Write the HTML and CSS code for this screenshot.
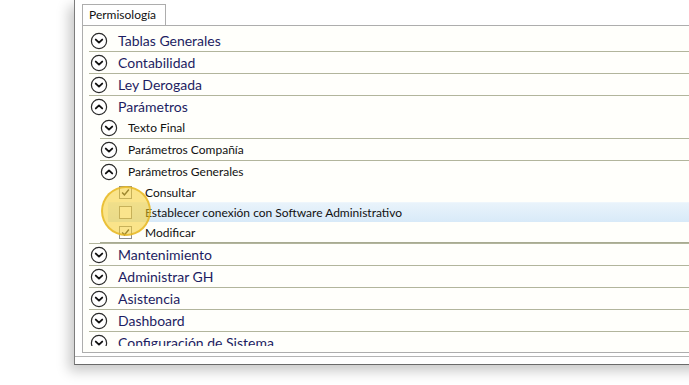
FILE: index.html
```
<!DOCTYPE html>
<html lang="es">
<head>
	<meta charset="UTF-8">
	<title>Permisología</title>
	<link rel="stylesheet" href="styles.css">
</head>
<body>

<div class="window">
	<div class="frame">
		<div class="tabs">
			<div class="tab">Permisología</div>
		</div>
		<div class="panel">
			<div class="tree">

				<div class="node">
					<div class="row top">
						<svg class="ico" viewBox="0 0 18 18"><circle cx="9" cy="9" r="7.6"/><path d="M5.8 7.6 L9 10.6 L12.2 7.6"/></svg>
						<span>Tablas Generales</span>
					</div>
				</div>
				<div class="node">
					<div class="row top">
						<svg class="ico" viewBox="0 0 18 18"><circle cx="9" cy="9" r="7.6"/><path d="M5.8 7.6 L9 10.6 L12.2 7.6"/></svg>
						<span>Contabilidad</span>
					</div>
				</div>
				<div class="node">
					<div class="row top">
						<svg class="ico" viewBox="0 0 18 18"><circle cx="9" cy="9" r="7.6"/><path d="M5.8 7.6 L9 10.6 L12.2 7.6"/></svg>
						<span>Ley Derogada</span>
					</div>
				</div>

				<div class="node open">
					<div class="row top">
						<svg class="ico" viewBox="0 0 18 18"><circle cx="9" cy="9" r="7.6"/><path d="M5.8 10.4 L9 7.4 L12.2 10.4"/></svg>
						<span>Parámetros</span>
					</div>
					<div class="children">
						<div class="sub">
							<div class="row">
								<svg class="ico" viewBox="0 0 18 18"><circle cx="9" cy="9" r="7.6"/><path d="M5.8 7.6 L9 10.6 L12.2 7.6"/></svg>
								<span>Texto Final</span>
							</div>
						</div>
						<div class="sub">
							<div class="row">
								<svg class="ico" viewBox="0 0 18 18"><circle cx="9" cy="9" r="7.6"/><path d="M5.8 7.6 L9 10.6 L12.2 7.6"/></svg>
								<span>Parámetros Compañía</span>
							</div>
						</div>
						<div class="sub open">
							<div class="row">
								<svg class="ico" viewBox="0 0 18 18"><circle cx="9" cy="9" r="7.6"/><path d="M5.8 10.4 L9 7.4 L12.2 10.4"/></svg>
								<span>Parámetros Generales</span>
							</div>
							<div class="checks">
								<label class="check"><span class="box on"><svg viewBox="0 0 13 13"><path d="M2.5 6.5 L5.2 9.3 L10.5 3"/></svg></span>Consultar</label>
								<label class="check hover"><span class="box"></span>Establecer conexión con Software Administrativo</label>
								<label class="check"><span class="box on"><svg viewBox="0 0 13 13"><path d="M2.5 6.5 L5.2 9.3 L10.5 3"/></svg></span>Modificar</label>
							</div>
						</div>
					</div>
				</div>

				<div class="node">
					<div class="row top">
						<svg class="ico" viewBox="0 0 18 18"><circle cx="9" cy="9" r="7.6"/><path d="M5.8 7.6 L9 10.6 L12.2 7.6"/></svg>
						<span>Mantenimiento</span>
					</div>
				</div>
				<div class="node">
					<div class="row top">
						<svg class="ico" viewBox="0 0 18 18"><circle cx="9" cy="9" r="7.6"/><path d="M5.8 7.6 L9 10.6 L12.2 7.6"/></svg>
						<span>Administrar GH</span>
					</div>
				</div>
				<div class="node">
					<div class="row top">
						<svg class="ico" viewBox="0 0 18 18"><circle cx="9" cy="9" r="7.6"/><path d="M5.8 7.6 L9 10.6 L12.2 7.6"/></svg>
						<span>Asistencia</span>
					</div>
				</div>
				<div class="node">
					<div class="row top">
						<svg class="ico" viewBox="0 0 18 18"><circle cx="9" cy="9" r="7.6"/><path d="M5.8 7.6 L9 10.6 L12.2 7.6"/></svg>
						<span>Dashboard</span>
					</div>
				</div>
				<div class="node">
					<div class="row top">
						<svg class="ico" viewBox="0 0 18 18"><circle cx="9" cy="9" r="7.6"/><path d="M5.8 7.6 L9 10.6 L12.2 7.6"/></svg>
						<span>Configuración de Sistema</span>
					</div>
				</div>

			</div>
		</div>
	</div>
</div>

<!-- click marker -->
<div class="click-dot"></div>

</body>
</html>
```

FILE: styles.css
```
html, body {
	margin: 0;
	height: 100%;
	background: #fff;
	overflow: hidden;
	font-family: "Segoe UI", Lato, sans-serif;
}

.window {
	margin-left: 74px;
	width: 640px;
	height: 364px;
	background: #fff;
	border-left: 1px solid #7c7c7c;
	border-bottom: 1px solid #6a6a6a;
	box-shadow: -5px 6px 12px rgba(0, 0, 0, 0.22);
}

.frame {
	height: 357px;
	padding-left: 7px;
	box-sizing: border-box;
	border-bottom: 1px solid #b4b4b4;
}

.tabs {
	display: flex;
	padding-top: 4px;
}

.tab {
	height: 21px;
	width: 84px;
	box-sizing: border-box;
	padding-left: 6px;
	border: 1px solid #adadad;
	border-bottom: none;
	font-size: 12px;
	line-height: 20px;
	color: #111;
	background: #fff;
}

.panel {
	height: 328px;
	box-sizing: border-box;
	border-top: 1px solid #adadad;
	border-left: 1px solid #adadad;
	border-bottom: 1px solid #adadad;
	padding: 4px 0 6px 0;
	background: #fffffb;
}

.tree {
	height: 100%;
	overflow: hidden;
	padding-left: 6px;
}

.row {
	display: flex;
	align-items: center;
	height: 21px;
	gap: 10px;
	font-size: 12px;
	color: #111;
}

.row.top {
	font-size: 14px;
	color: #1d1d62;
	gap: 10px;
	padding-left: 1px;
}

.node {
	border-bottom: 1px solid #b2b59c;
}

.children {
	padding-left: 11px;
}

.sub > .row {
	border-bottom: 1px solid #b2b59c;
}

.sub:last-child > .row {
	border-bottom: none;
}

.sub.open {
	border-bottom: 1px solid #a8ab92;
}

.ico {
	width: 18px;
	height: 18px;
	flex: none;
}

.ico circle {
	fill: #fff;
	stroke: #2a2a2a;
	stroke-width: 1.2;
}

.ico path {
	fill: none;
	stroke: #111;
	stroke-width: 1.9;
	stroke-linecap: round;
	stroke-linejoin: round;
}

.checks {
	display: flex;
	flex-direction: column;
}

.check {
	display: flex;
	align-items: center;
	height: 20px;
	padding-left: 19px;
	gap: 13px;
	font-size: 12px;
	color: #111;
}

.check.hover {
	margin-left: 8px;
	padding-left: 11px;
	height: 19px;
	background: linear-gradient(#e9f3fb, #d8eaf8);
	border-top: 1px solid #eef6fc;
}

.box {
	width: 13px;
	height: 13px;
	box-sizing: border-box;
	border: 1px solid #8e8f8f;
	background: #fff;
	flex: none;
}

.box svg {
	display: block;
	width: 11px;
	height: 11px;
}

.box path {
	fill: none;
	stroke: #333;
	stroke-width: 1.7;
}

.click-dot {
	position: absolute;
	left: 101px;
	top: 186px;
	width: 50px;
	height: 50px;
	box-sizing: border-box;
	border-radius: 50%;
	background: rgba(246, 205, 45, 0.55);
	border: 2px solid rgba(228, 180, 30, 0.75);
}
```
